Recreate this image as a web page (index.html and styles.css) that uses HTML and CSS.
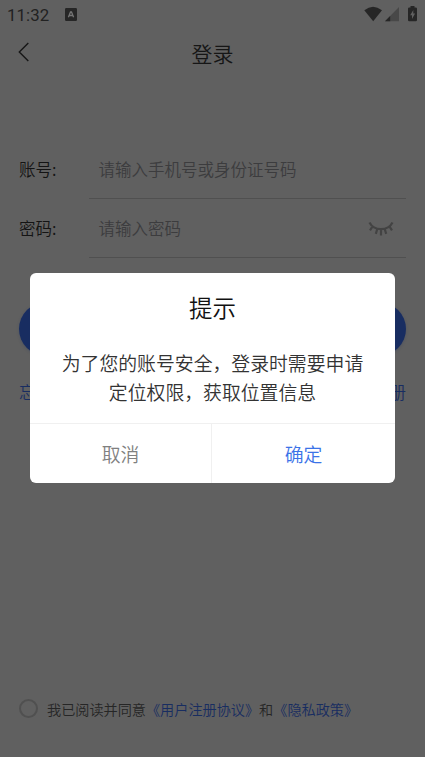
FILE: index.html
```html
<!DOCTYPE html>
<html lang="zh-CN">
<head>
<meta charset="utf-8">
<title>登录</title>
<link rel="stylesheet" href="styles.css">
</head>
<body>
<div class="screen">
  <div class="status">
    <span class="time">11:32</span>
    <svg class="badge" width="12" height="13" viewBox="0 0 12 13"><rect width="12" height="13" rx="1.2" fill="#262626"/><path d="M3.4 9.2 5.5 3.9h1L8.600 9.200M4.300 7.500h3.400" fill="none" stroke="#747474" stroke-width="1.300"/></svg>
    <svg class="indicators" width="54" height="18" viewBox="0 0 54 18">
      <path d="M0.300 4.300Q9-2.800 18 4.300L9.200 15.200Z" fill="#262626"/>
      <path d="M35 1V15.200H21Z" fill="#484848"/>
      <path d="M26.200 10V15.200H21Z" fill="#262626"/>
      <path d="M46.500 1.500V0h4v1.500h1.300q1.200 0 1.200 1.200V14q0 1.200-1.200 1.200h-6.600Q44 15.200 44 14V2.700q0-1.200 1.200-1.200Z" fill="#262626"/>
      <path d="M49.300 4 46.200 9.200H48v3.900l3.100-5.500h-1.800Z" fill="#606060"/>
    </svg>
  </div>
  <header class="nav">
    <svg width="12" height="20" viewBox="0 0 12 20"><path d="M10.300 1 1.300 10l9 9" fill="none" stroke="#161616" stroke-width="1.400"/></svg>
    <h1>登录</h1>
  </header>
  <main class="form">
    <div class="row"><label>账号:</label><div class="field">请输入手机号或身份证号码</div></div>
    <div class="row"><label>密码:</label><div class="field">请输入密码
      <svg width="26" height="16" viewBox="0 0 26 16"><path d="M1.500 1.500C6 10.300 20 10.300 24.500 1.500M4.600 5.400 2 9.300M9.300 8 7.800 12.800M13 8.400V14.500M16.700 8l1.500 4.800M21.400 5.400 24 9.300" fill="none" stroke="#434343" stroke-width="2.200"/></svg>
    </div></div>
    <div class="submit"></div>
    <div class="links"><span>忘记密码</span><span>立即注册</span></div>
  </main>
  <footer class="agree"><i class="radio"></i><p>我已阅读并同意<a>《用户注册协议》</a>和<a>《隐私政策》</a></p></footer>
  <section class="dialog">
    <h2>提示</h2>
    <p>为了您的账号安全，登录时需要申请<br>定位权限，获取位置信息</p>
    <div class="actions"><span class="cancel">取消</span><span class="ok">确定</span></div>
  </section>
</div>
</body>
</html>
```
FILE: styles.css
```css
* { box-sizing: border-box; margin: 0; padding: 0; }
body { font-family: "Noto Sans CJK SC", sans-serif; font-weight: 350; background: #606060; }
.screen { position: relative; width: 425px; height: 757px; overflow: hidden; background: #606060; display: flex; flex-direction: column; }
.status { height: 30px; display: flex; align-items: center; padding: 0 7px; }
.time { font: 400 16.8px/30px Roboto, sans-serif; color: #222; width: 58px; letter-spacing: 0.1px; }
.badge { display: block; margin-top: -1px; }
.indicators { display: block; margin-left: auto; margin-top: -1px; }
.nav { height: 46px; display: grid; grid-template-columns: 12px 1fr 12px; align-items: center; padding: 0 18px; }
.nav svg { margin-bottom: 2px; }
.nav h1 { font-size: 21px; line-height: 30px; font-weight: 350; text-align: center; color: #161616; }
.form { padding: 64px 19px 0; }
.row { display: flex; height: 59px; font-size: 16.5px; line-height: 59px; }
.row label { width: 70px; color: #141414; }
.field { flex: 1; display: flex; justify-content: space-between; align-items: center; border-bottom: 1px solid #505050; padding: 1px 12px 0 9.5px; color: #3c3c3e; }
.field svg { margin-top: 0; }
.submit { height: 54px; margin-top: 44px; border-radius: 27px; background: #182d61; box-shadow: 0 1px 3px rgba(24, 45, 97, 0.25); }
.links { display: flex; justify-content: space-between; margin-top: 23px; font-size: 16.5px; line-height: 26px; color: #182d61; }
.agree { margin-top: auto; height: 26px; margin-bottom: 35px; padding-left: 19px; display: flex; align-items: center; font-size: 14.15px; line-height: 26px; color: #262626; }
.radio { width: 19px; height: 19px; border: 2px solid #505050; border-radius: 50%; margin: -2px 9px 0 0; }
.agree a { color: #182d61; }
.dialog { position: absolute; left: 30px; top: 273px; width: 365px; height: 210px; border-radius: 6px; background: #fff; display: flex; flex-direction: column; text-align: center; overflow: hidden; }
.dialog h2 { margin-top: 17px; font-size: 23.5px; line-height: 34px; font-weight: 350; color: #111; }
.dialog p { margin-top: 25px; font-size: 18.85px; line-height: 28.5px; color: #333; white-space: nowrap; }
.actions { margin-top: auto; height: 60px; display: flex; border-top: 1px solid #f0f0f0; font-size: 18.85px; line-height: 59px; }
.actions span { flex: 1; }
.actions .cancel { flex: 0 0 182px; color: #808080; border-right: 1px solid #f0f0f0; }
.ok { color: #3b73e8; }
```
